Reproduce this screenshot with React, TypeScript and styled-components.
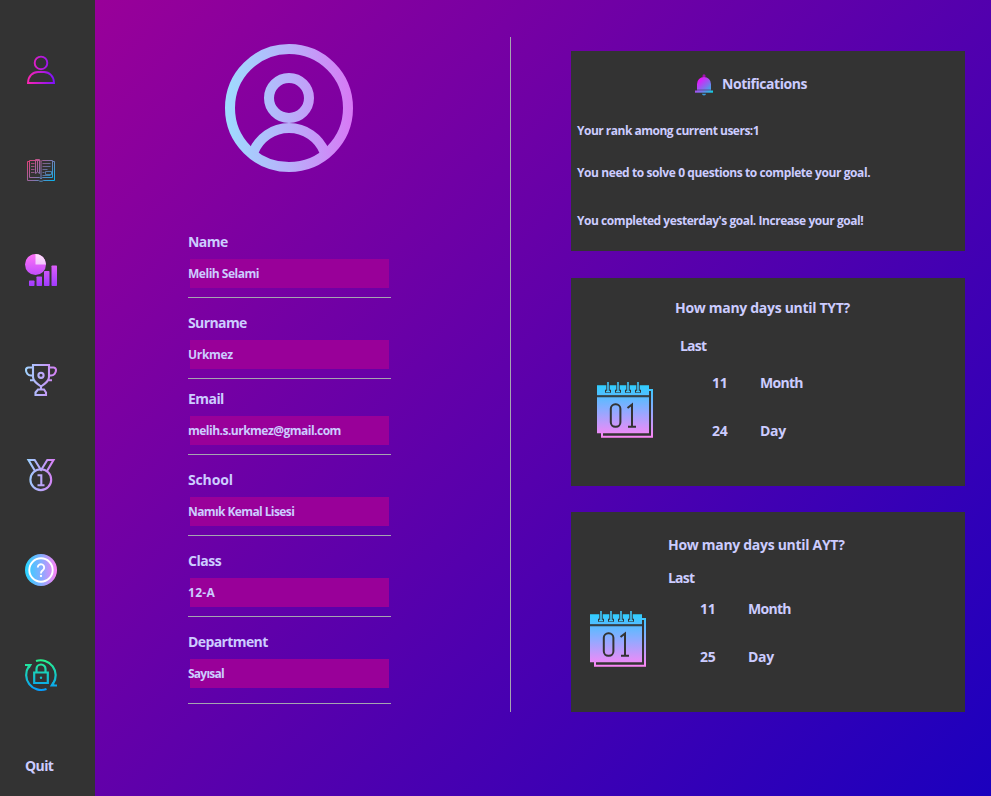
import React from "react";
import styled, { createGlobalStyle } from "styled-components";

const GlobalStyle = createGlobalStyle`
  * { box-sizing: border-box; }
  body {
    margin: 0;
    font-family: "Open Sans", "Noto Sans", sans-serif;
    color: #ccccff;
  }
`;

const Window = styled.div`
  display: flex;
  width: 991px;
  height: 796px;
  overflow: hidden;
`;

const Sidebar = styled.nav`
  flex: none;
  display: flex;
  flex-direction: column;
  align-items: flex-start;
  width: 95px;
  padding: 54px 0 0 25px;
  background: #333333;
`;

const NavButton = styled.button<{ $gap: number }>`
  display: block;
  width: 32px;
  height: 32px;
  margin: 0 0 ${(p) => p.$gap}px;
  padding: 0;
  border: 0;
  background: none;
`;

const Label = styled.div<{ $spacing?: number }>`
  height: 20px;
  font-size: 14px;
  line-height: 20px;
  font-weight: 700;
  letter-spacing: ${(p) => p.$spacing ?? -0.3}px;
  white-space: nowrap;
`;

const Content = styled.main`
  flex: none;
  display: flex;
  width: 896px;
  height: 796px;
  background: linear-gradient(131.62deg, #990099, #1b00be);
`;

const Profile = styled.section`
  flex: none;
  display: flex;
  flex-direction: column;
  width: 203px;
  margin-left: 93px;
  padding-top: 44px;
`;

const Avatar = styled.div`
  width: 128px;
  height: 128px;
  margin: 0 0 60px 37px;
`;

const Field = styled.div<{ $after: number }>`
  margin-bottom: ${(p) => p.$after}px;
`;

const ValueBox = styled.div<{ $below: number }>`
  width: 199px;
  height: 29px;
  margin: 7px 0 ${(p) => p.$below}px 2px;
  background: #990099;
`;

const Value = styled.div<{ $spacing: number }>`
  margin-left: -2px;
  font-size: 12px;
  line-height: 29px;
  font-weight: 700;
  letter-spacing: ${(p) => p.$spacing}px;
  white-space: nowrap;
`;

const Underline = styled.div`
  width: 203px;
  height: 1px;
  background: #a5a5b0;
`;

const Divider = styled.div`
  flex: none;
  width: 1px;
  height: 675px;
  margin: 37px 0 0 119px;
  background: #a5a5b0;
`;

const Cards = styled.section`
  flex: none;
  display: flex;
  flex-direction: column;
  width: 394px;
  margin-left: 60px;
  padding-top: 51px;
`;

const NoticeCard = styled.article`
  height: 200px;
  padding: 23px 0 0 6px;
  background: #333333;
`;

const NoticeHeader = styled.header`
  display: flex;
  gap: 9px;
  height: 22px;
  margin: 0 0 25px 118px;
`;

const Notice = styled.p<{ $after?: number; $spacing: number }>`
  margin: 0 0 ${(p) => p.$after ?? 0}px;
  font-size: 12px;
  line-height: 20px;
  font-weight: 700;
  letter-spacing: ${(p) => p.$spacing}px;
  white-space: nowrap;
`;

const CountCard = styled.article<{ $height: number; $left: number; $above: number }>`
  display: flex;
  height: ${(p) => p.$height}px;
  margin-top: ${(p) => p.$above}px;
  padding-left: ${(p) => p.$left}px;
  background: #333333;
`;

const CalendarSlot = styled.div<{ $top: number }>`
  flex: none;
  width: 56px;
  height: 56px;
  margin: ${(p) => p.$top}px 22px 0 0;
`;

const CountBody = styled.div<{ $top: number }>`
  padding-top: ${(p) => p.$top}px;
`;

const Last = styled.div<{ $indent: number; $above: number; $below: number }>`
  margin: ${(p) => p.$above}px 0 ${(p) => p.$below}px ${(p) => p.$indent}px;
`;

const Units = styled.div<{ $indent: number }>`
  display: grid;
  grid-template-columns: 48px auto;
  justify-content: start;
  row-gap: 28px;
  margin-left: ${(p) => p.$indent}px;
`;

const Svg = styled.svg`
  display: block;
  overflow: visible;
`;

const UserIcon = () => (
  <Svg width="32" height="32" fill="none">
    <defs>
      <linearGradient id="user" gradientUnits="userSpaceOnUse" x1="2" y1="0" x2="30" y2="0">
        <stop stopColor="#ff25b0" /><stop offset="1" stopColor="#7b10ff" />
      </linearGradient>
    </defs>
    <g stroke="url(#user)" strokeWidth="1.9">
      <circle cx="16" cy="8.9" r="6.3" />
      <path d="M3 29c0-7 5-11 10-11h6c5 0 10 4 10 11z" />
    </g>
  </Svg>
);

const BookIcon = () => (
  <Svg width="32" height="32" fill="none">
    <defs>
      <linearGradient id="book" gradientUnits="userSpaceOnUse" x1="3" y1="6" x2="29" y2="27">
        <stop stopColor="#e04078" /><stop offset=".5" stopColor="#8a72a8" /><stop offset="1" stopColor="#08b5f0" />
      </linearGradient>
    </defs>
    <g stroke="url(#book)" strokeWidth="1">
      <path d="M4.5 7.5h-2v19h11.2c.8 1 3.8 1 4.6 0H29.5v-19h-2M4.5 6.5v17h9.500c1 0 2 .6 2 1.500 0-.9 1-1.500 2-1.500h9.500v-17H18c-1 0-2 .4-2 1.200 0-.8-1-1.200-2-1.200zM16 8v17M10.500 5.500v14l2-1.500 2 1.500v-14zM12.500 6v12" />
      <path d="M6 9.500h3.500M6 12.500h3.500M6 15.500h3.500M6 18.500h3.500M17.500 9.500h8M17.500 12.500h8M17.500 15.500h5M17.500 18.500h2M17.500 21.500h8M20.500 17.500h6v3h-6z" opacity=".8" />
    </g>
  </Svg>
);

const ChartIcon = () => (
  <Svg width="32" height="32">
    <defs>
      <linearGradient id="chart" gradientUnits="userSpaceOnUse" x1="0" y1="0" x2="0" y2="32">
        <stop stopColor="#ff72f7" /><stop offset="1" stopColor="#a13bff" />
      </linearGradient>
      <linearGradient id="slice" x1="0" y1="0" x2="0" y2="1">
        <stop stopColor="#ffe2fb" /><stop offset="1" stopColor="#f3c5ff" />
      </linearGradient>
    </defs>
    <circle cx="10.500" cy="10.500" r="10.500" fill="url(#chart)" />
    <path d="M10.500 0A10.500 10.500 0 0 1 21 10.500H10.500z" fill="url(#slice)" />
    <g fill="url(#chart)">
      <rect x="4" y="26.500" width="5.500" height="5.500" rx=".7" />
      <rect x="11.500" y="22.500" width="5.500" height="9.500" rx=".7" />
      <rect x="19" y="17" width="5.500" height="15" rx=".7" />
      <rect x="26.500" y="11.500" width="5.500" height="20.500" rx=".7" />
    </g>
  </Svg>
);

const TrophyIcon = () => (
  <Svg width="32" height="32" fill="none">
    <defs>
      <linearGradient id="trophy" gradientUnits="userSpaceOnUse" x1="0" y1="0" x2="32" y2="0">
        <stop stopColor="#a0d5ff" /><stop offset="1" stopColor="#d580f5" />
      </linearGradient>
    </defs>
    <g stroke="url(#trophy)" strokeWidth="2.1">
      <path d="M8 1h16v12c0 4-3.500 6.500-8 9.500C11.500 19.500 8 17 8 13zM8 3.500H3.500A2.500 2.500 0 0 0 1 6c0 3 2 5.500 5 5.500h2M24 3.500h4.500A2.500 2.500 0 0 1 31 6c0 3-2 5.500-5 5.500h-2M5 16.200h3.500M23.500 16.200H27M16 22v4M13 25.500h6l2 3V31H10.500v-2.500z" />
      <circle cx="16" cy="11.300" r="2.600" />
    </g>
  </Svg>
);

const MedalIcon = () => (
  <Svg width="32" height="32" fill="none">
    <defs>
      <linearGradient id="medal" gradientUnits="userSpaceOnUse" x1="2" y1="0" x2="30" y2="0">
        <stop stopColor="#9bd2ff" /><stop offset="1" stopColor="#d97cf5" />
      </linearGradient>
    </defs>
    <g stroke="url(#medal)" strokeWidth="2.100">
      <circle cx="15.800" cy="20.700" r="10.400" />
      <path d="M10 12 3.500 1h6.200l6.300 10M22 12l6.500-11h-6.200L15.500 12M12.500 16.300h3.800V26M12.500 26.200h7" />
    </g>
  </Svg>
);

const HelpIcon = () => (
  <Svg width="32" height="32" fill="none">
    <defs>
      <linearGradient id="help" x1="0" y1="0" x2="1" y2="0">
        <stop stopColor="#25d5ff" /><stop offset=".5" stopColor="#83adff" /><stop offset="1" stopColor="#ff80f5" />
      </linearGradient>
    </defs>
    <circle cx="16" cy="16" r="16" fill="url(#help)" />
    <g stroke="#fff">
      <circle cx="16" cy="16" r="11.700" strokeWidth="1.900" />
      <path d="M12.800 13.500a3.200 3.200 0 1 1 5.200 2.400c-1.200.9-2 1.500-2 3v.6" strokeWidth="1.900" />
    </g>
    <circle cx="16" cy="22" r="1.150" fill="#fff" />
  </Svg>
);

const LockIcon = () => (
  <Svg width="32" height="32" fill="none">
    <defs>
      <linearGradient id="lock" gradientUnits="userSpaceOnUse" x1="0" y1="0" x2="0" y2="32">
        <stop stopColor="#28f58a" /><stop offset="1" stopColor="#059bff" />
      </linearGradient>
    </defs>
    <g stroke="url(#lock)" strokeWidth="2.2">
      <path d="M11 2a15 15 0 0 1 17 22.800M21.500 30A15 15 0 0 1 4 7.200" />
      <path d="M9.200 13.500h13.600v10.500H9.200zM11.500 13.500V10a4.500 4.500 0 0 1 9 0v3.500" />
    </g>
    <path d="M0 5h7.200L4.500 9.500 2.500 7H0zM32 27.500h-7.200l2.700-4.500 2 2.500H32z" fill="url(#lock)" />
    <circle cx="16" cy="18.700" r="1.200" fill="url(#lock)" />
  </Svg>
);

const AvatarIcon = () => (
  <Svg width="128" height="128" fill="none">
    <defs>
      <linearGradient id="avatar" gradientUnits="userSpaceOnUse" x1="0" y1="0" x2="128" y2="0">
        <stop stopColor="#9edcff" /><stop offset=".5" stopColor="#b8b0fa" /><stop offset="1" stopColor="#d878f5" />
      </linearGradient>
    </defs>
    <g stroke="url(#avatar)" strokeWidth="10">
      <circle cx="64" cy="64" r="59" />
      <circle cx="64" cy="54" r="20" />
      <path d="M28.500 108C34 94 48 84 64 84s30 10 35.500 24" />
    </g>
  </Svg>
);

const BellIcon = () => (
  <Svg width="18" height="21" viewBox="0 0.500 18 21">
    <defs>
      <linearGradient id="bell" gradientUnits="userSpaceOnUse" x1="3" y1="4" x2="18" y2="20">
        <stop stopColor="#ff00ff" /><stop offset=".55" stopColor="#8070ed" /><stop offset="1" stopColor="#00dfdf" />
      </linearGradient>
    </defs>
    <path d="M2 17v-6.500a7 7 0 0 1 14 0V17z" fill="url(#bell)" />
    <path d="M7.500 3.500V2.200a1.500 1.500 0 0 1 3 0v1.300z" fill="#a010b0" />
    <path d="M2 16h14v1H2z" fill="#604a9b" />
    <path d="M0 17h18v2.200H0z" fill="url(#bell)" />
    <path d="M7 20.200h4a2 1.800 0 0 1-4 0z" fill="#399bd8" />
  </Svg>
);

const CalendarIcon = ({ id }: { id: string }) => (
  <Svg width="56" height="56" fill="none">
    <defs>
      <linearGradient id={id} gradientUnits="userSpaceOnUse" x1="0" y1="3" x2="0" y2="56">
        <stop stopColor="#2ecfff" /><stop offset=".2" stopColor="#53bdff" />
        <stop offset=".5" stopColor="#93a9ff" /><stop offset="1" stopColor="#ff85f5" />
      </linearGradient>
    </defs>
    <path d="M0 3.300h52V13H0zM0 15.300h52V51.300H0z" fill={`url(#${id})`} />
    <path d="M52 8h3v46.700H5V51" stroke={`url(#${id})`} strokeWidth="2" />
    <path d="M0 13.800h52" stroke="#407a9c" strokeWidth=".6" />
    {[11, 21, 31, 41].map((x) => (
      <g key={x}>
        <path d={`M${x - 1.700} 2v5.700h-1.300v3h6v-3h-1.300V2z`} fill="#333" />
        <path d={`M${x} 0v9.500M${x - 2} 9.500h4`} stroke="#42c5fa" strokeWidth="1.600" />
      </g>
    ))}
    <g stroke="#333" strokeWidth="2">
      <rect x="13.800" y="22.300" width="9.600" height="22.500" rx="4.500" />
      <path d="M30.500 26l4.500-3.500v22.300M31 44.800h8" />
    </g>
  </Svg>
);

const navItems = [
  { name: "Profile", Icon: UserIcon, gap: 68 },
  { name: "Lessons", Icon: BookIcon, gap: 68 },
  { name: "Statistics", Icon: ChartIcon, gap: 78 },
  { name: "Trophies", Icon: TrophyIcon, gap: 63 },
  { name: "Ranking", Icon: MedalIcon, gap: 63 },
  { name: "Help", Icon: HelpIcon, gap: 73 },
  { name: "Password", Icon: LockIcon, gap: 65 },
];

const fields = [
  { label: "Name", value: "Melih Selami", after: 15, below: 9, tracking: -0.55, spacing: -0.48 },
  { label: "Surname", value: "Urkmez", after: 10, below: 9, tracking: -0.6, spacing: -0.3 },
  { label: "Email", value: "melih.s.urkmez@gmail.com", after: 15, below: 9, tracking: -0.55, spacing: -0.51 },
  { label: "School", value: "Namık Kemal Lisesi", after: 15, below: 9, tracking: -0.15, spacing: -0.6 },
  { label: "Class", value: "12-A", after: 15, below: 9, tracking: -0.45, spacing: 0.3 },
  { label: "Department", value: "Sayısal", after: 0, below: 15, tracking: -0.6, spacing: -0.75 },
];

export default function App() {
  return (
    <>
      <GlobalStyle />
      <Window>
        <Sidebar>
          {navItems.map(({ name, Icon, gap }) => (
            <NavButton key={name} aria-label={name} $gap={gap}>
              <Icon />
            </NavButton>
          ))}
          <Label $spacing={-0.6}>Quit</Label>
        </Sidebar>
        <Content>
          <Profile>
            <Avatar><AvatarIcon /></Avatar>
            {fields.map((f) => (
              <Field key={f.label} $after={f.after}>
                <Label $spacing={f.tracking}>{f.label}</Label>
                <ValueBox $below={f.below}>
                  <Value $spacing={f.spacing}>{f.value}</Value>
                </ValueBox>
                <Underline />
              </Field>
            ))}
          </Profile>
          <Divider />
          <Cards>
            <NoticeCard>
              <NoticeHeader>
                <BellIcon />
                <Label $spacing={-0.46}>Notifications</Label>
              </NoticeHeader>
              <Notice $after={22} $spacing={-0.5}>Your rank among current users:1</Notice>
              <Notice $after={28} $spacing={-0.41}>You need to solve 0 questions to complete your goal.</Notice>
              <Notice $spacing={-0.45}>You completed yesterday's goal. Increase your goal!</Notice>
            </NoticeCard>
            <CountCard $above={27} $height={208} $left={26}>
              <CalendarSlot $top={104}><CalendarIcon id="cal-tyt" /></CalendarSlot>
              <CountBody $top={20}>
                <Label>How many days until TYT?</Label>
                <Last $indent={5} $above={18} $below={17}><Label $spacing={-0.8}>Last</Label></Last>
                <Units $indent={37}>
                  <Label>11</Label><Label $spacing={-0.7}>Month</Label>
                  <Label>24</Label><Label>Day</Label>
                </Units>
              </CountBody>
            </CountCard>
            <CountCard $above={26} $height={200} $left={19}>
              <CalendarSlot $top={99}><CalendarIcon id="cal-ayt" /></CalendarSlot>
              <CountBody $top={23}>
                <Label>How many days until AYT?</Label>
                <Last $indent={0} $above={13} $below={11}><Label $spacing={-0.8}>Last</Label></Last>
                <Units $indent={32}>
                  <Label>11</Label><Label $spacing={-0.7}>Month</Label>
                  <Label>25</Label><Label>Day</Label>
                </Units>
              </CountBody>
            </CountCard>
          </Cards>
        </Content>
      </Window>
    </>
  );
}
